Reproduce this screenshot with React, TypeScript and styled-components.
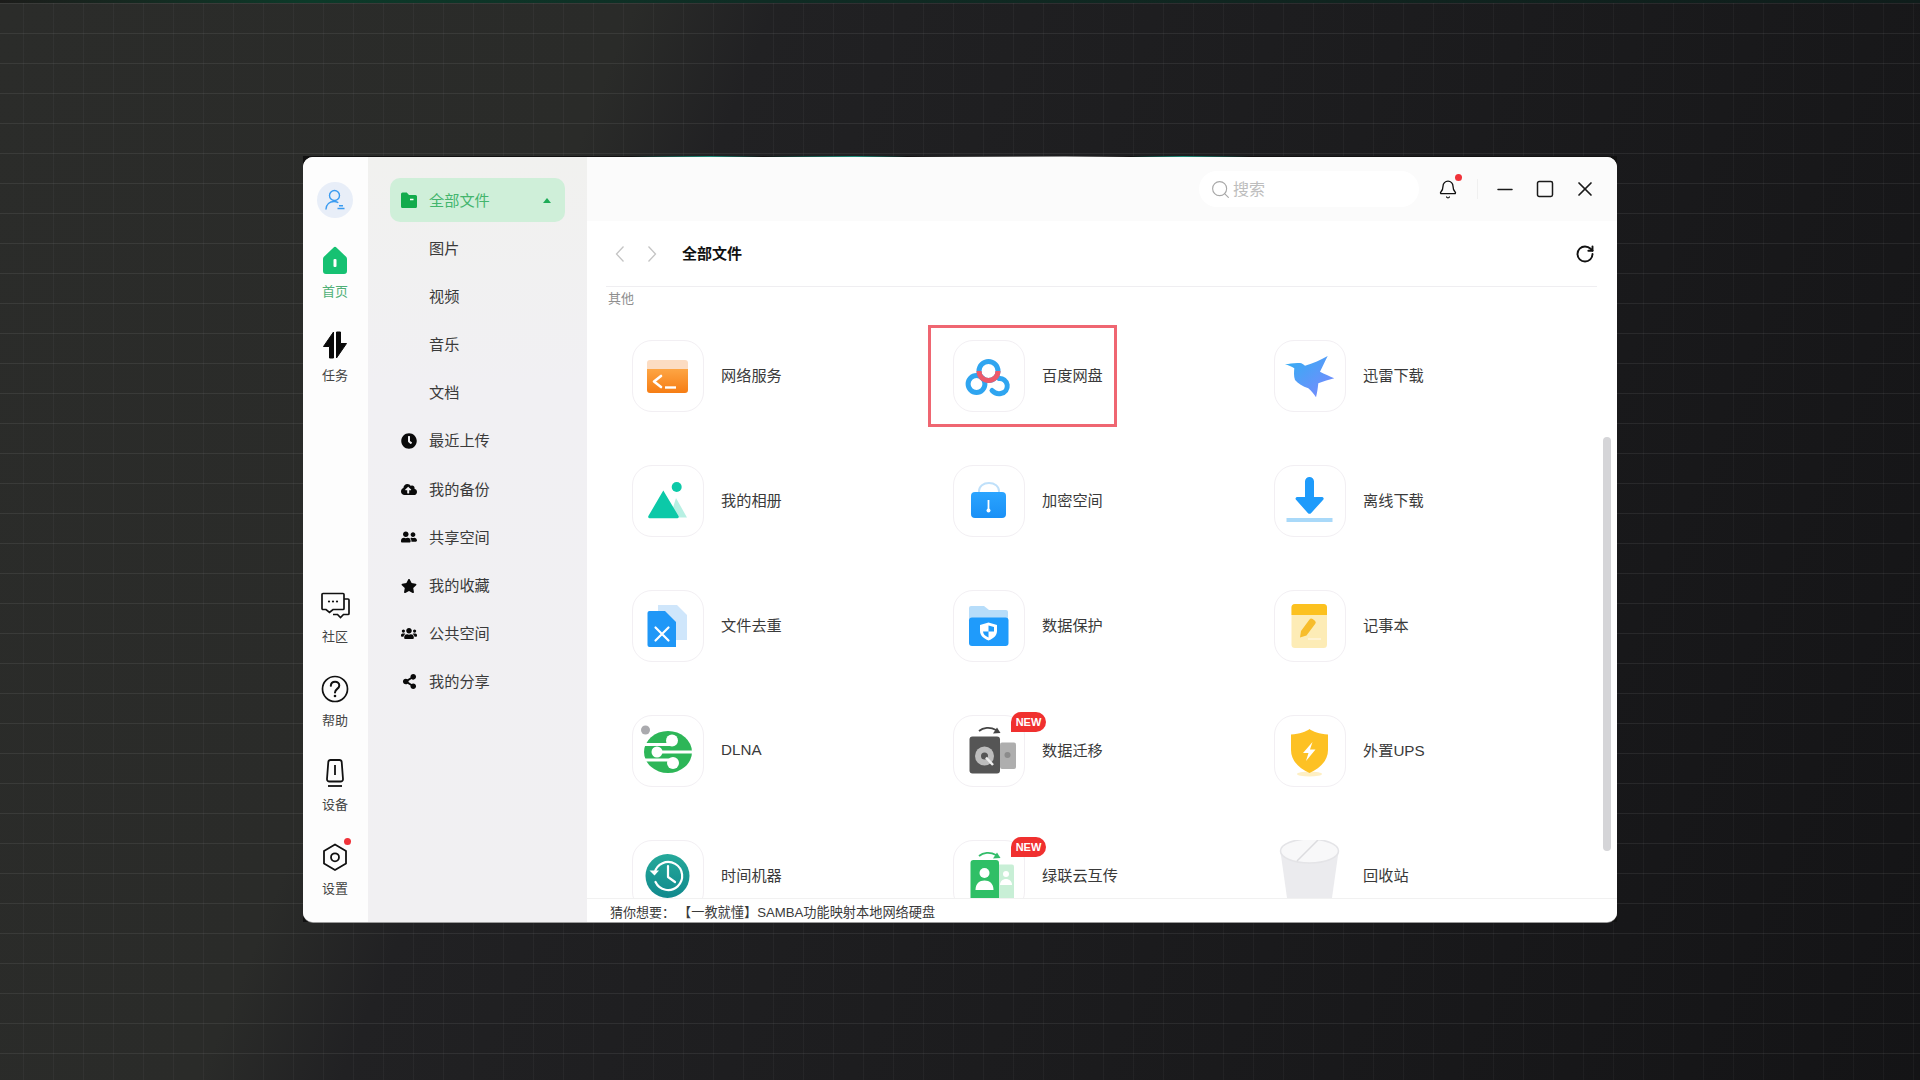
import React from "react";
import styled, { createGlobalStyle } from "styled-components";
import { Bell, Minus, RotateCw, Search, Square, X } from "lucide-react";
import {
  FaClock,
  FaCloudUploadAlt,
  FaShareAlt,
  FaStar,
  FaUserFriends,
  FaUsers,
} from "react-icons/fa";

const GlobalStyle = createGlobalStyle`
  html, body {
    margin: 0;
    padding: 0;
    height: 100%;
  }
  body {
    font-family: "Liberation Sans", "Noto Sans CJK SC", sans-serif;
    color: #333;
  }
  * {
    box-sizing: border-box;
  }
`;

const Page = styled.div`
  width: 100vw;
  height: 100vh;
  overflow: hidden;
  display: flex;
  align-items: center;
  justify-content: center;
  background:
    linear-gradient(90deg, #1c1c1a 0%, #0c3a29 16%, #0f2c24 40%, #10241f 70%, #0f1d1b 100%) 0 0 / 100% 3px no-repeat,
    linear-gradient(rgba(255, 255, 255, 0.07) 1px, transparent 1px) 0 3px / 30px 30px,
    linear-gradient(90deg, rgba(255, 255, 255, 0.035) 1px, transparent 1px) 23px 0 / 30px 30px,
    linear-gradient(112deg, #2b2c2a 0%, #2a2b29 27%, #212123 33%, #1c1c1e 60%, #141416 100%);
`;

const Frame = styled.div`
  width: 1314px;
  height: 766px;
  margin-bottom: 2px;
  padding-top: 1px;
  background: linear-gradient(
    90deg,
    #111 0%,
    #111 25%,
    #1d8f7c 31%,
    #111 35%,
    #1d8f7c 42%,
    #111 46%,
    #8f8f8f 58%,
    #111 63%,
    #1d8f7c 67%,
    #111 72%,
    #111 100%
  );
`;

const Window = styled.div`
  width: 100%;
  height: 100%;
  display: flex;
  border-radius: 10px;
  overflow: hidden;
  background: #fff;
  box-shadow: 0 1px 0 #9a9a9a;
`;

const Rail = styled.nav`
  width: 65px;
  flex-shrink: 0;
  background: #fdfdfd;
  display: flex;
  flex-direction: column;
  align-items: center;
  justify-content: space-between;
  padding: 25px 1px 24px 0;
`;

const RailGroup = styled.div`
  display: flex;
  flex-direction: column;
  align-items: center;
  gap: 29px;
`;

const Avatar = styled.div`
  width: 36px;
  height: 36px;
  margin-bottom: -1px;
  border-radius: 50%;
  background: #e8eef8;
  display: flex;
  align-items: center;
  justify-content: center;
`;

const RailItem = styled.div`
  position: relative;
  display: flex;
  flex-direction: column;
  align-items: center;
  gap: 7px;
`;

const RailIcon = styled.div`
  width: 30px;
  height: 30px;
  display: flex;
  align-items: center;
  justify-content: center;
`;

const RailLabel = styled.span<{ $active?: boolean }>`
  font-size: 13px;
  line-height: 18px;
  color: ${(p) => (p.$active ? "#4fb077" : "#444")};
`;

const RedDot = styled.span`
  position: absolute;
  width: 7px;
  height: 7px;
  border-radius: 50%;
  background: #f0333a;
`;

const RailDot = styled(RedDot)`
  top: -5px;
  right: -1px;
`;

const Sidebar = styled.aside`
  width: 219px;
  flex-shrink: 0;
  background: linear-gradient(180deg, #f1f1ef 0%, #f1f0f3 30%, #f1f0f2 100%);
  padding: 21px 22px 0;
  display: flex;
  flex-direction: column;
  gap: 4.2px;
`;

const MenuRow = styled.div<{ $active?: boolean; $indent?: boolean }>`
  height: 44px;
  flex-shrink: 0;
  display: flex;
  align-items: center;
  gap: 12px;
  padding-left: ${(p) => (p.$indent ? "39px" : "11px")};
  padding-right: 14px;
  padding-bottom: 3px;
  border-radius: 10px;
  font-size: 15.2px;
  background: ${(p) => (p.$active ? "#cfefd9" : "transparent")};
  color: ${(p) => (p.$active ? "#43b56d" : "#3a3a3a")};
`;

const MenuIcon = styled.span`
  width: 16px;
  height: 16px;
  margin-top: 3px;
  display: flex;
  align-items: center;
  justify-content: center;
  color: #0a0a0a;
`;

const Caret = styled.span`
  margin-left: auto;
  margin-top: 3px;
  width: 0;
  height: 0;
  border-left: 4px solid transparent;
  border-right: 4px solid transparent;
  border-bottom: 5px solid #1eab57;
`;

const Main = styled.main`
  position: relative;
  flex: 1;
  min-width: 0;
  display: flex;
  flex-direction: column;
`;

const TopBar = styled.header`
  height: 64px;
  flex-shrink: 0;
  background: #fbfbfb;
  display: flex;
  align-items: center;
  justify-content: flex-end;
  padding-right: 20px;
`;

const SearchBox = styled.div`
  width: 220px;
  height: 36px;
  border-radius: 18px;
  background: #fff;
  display: flex;
  align-items: center;
  gap: 2px;
  padding-left: 11px;
  font-size: 16px;
  color: #bdbdbd;
  margin-right: 19px;
`;

const SearchText = styled.span`
  padding-bottom: 2px;
`;

const BellBox = styled.div`
  position: relative;
  width: 20px;
  height: 22px;
  display: flex;
  align-items: center;
  justify-content: center;
  margin-right: 19px;
`;

const BellDot = styled(RedDot)`
  top: -4px;
  right: -4px;
`;

const VRule = styled.div`
  width: 1px;
  height: 20px;
  background: #f0f0f0;
  margin-right: 15px;
`;

const WinButtons = styled.div`
  display: flex;
  align-items: center;
  gap: 16px;
`;

const WinButton = styled.div`
  width: 24px;
  height: 24px;
  display: flex;
  align-items: center;
  justify-content: center;
  color: #1a1a1a;
`;

const PathBar = styled.div`
  height: 66px;
  flex-shrink: 0;
  margin: 0 20px 0 19px;
  border-bottom: 1px solid #efeef1;
  display: flex;
  align-items: center;
  padding-left: 9px;
`;

const NavArrows = styled.div`
  display: flex;
  align-items: center;
  gap: 22px;
  margin-right: 25px;
`;

const PathTitle = styled.h1`
  margin: 0;
  padding-bottom: 2px;
  font-size: 15px;
  font-weight: 700;
  color: #111;
`;

const RefreshBtn = styled.div`
  margin-left: auto;
  margin-right: 2px;
  display: flex;
  color: #111;
`;

const Scroller = styled.div`
  flex: 1;
  min-height: 0;
  overflow: hidden;
  padding: 3px 0 0 20px;
`;

const GroupTitle = styled.div`
  padding-left: 1px;
  font-size: 13px;
  line-height: 18px;
  color: #8f8f8f;
  margin-bottom: 32px;
`;

const AppGrid = styled.div`
  display: grid;
  grid-template-columns: repeat(3, 321px);
  grid-auto-rows: 125px;
  padding-left: 25px;
`;

const AppItem = styled.div`
  position: relative;
  height: 72px;
  display: flex;
  align-items: center;
  gap: 17px;
`;

const Tile = styled.div<{ $bare?: boolean }>`
  position: relative;
  width: 72px;
  height: 72px;
  flex-shrink: 0;
  border-radius: 20px;
  border: 1px solid ${(p) => (p.$bare ? "transparent" : "#f2eff3")};
  background: #fff;

  svg {
    position: absolute;
    left: -1px;
    top: -1px;
  }
`;

const AppLabel = styled.span`
  padding-bottom: 4px;
  font-size: 15.2px;
  color: #3a3a3a;
  white-space: nowrap;
`;

const NewBadge = styled.span`
  position: absolute;
  left: 57px;
  top: -4px;
  width: 35px;
  height: 20px;
  border-radius: 10px 10px 10px 0;
  background: #f0302f;
  color: #fff;
  font-size: 11px;
  font-weight: 700;
  line-height: 20px;
  text-align: center;
`;

const Highlight = styled.div`
  position: absolute;
  left: -25px;
  top: -15px;
  width: 189px;
  height: 102px;
  border: 3px solid #ef6671;
  pointer-events: none;
`;

const ScrollThumb = styled.div`
  position: absolute;
  right: 6px;
  top: 280px;
  width: 8px;
  height: 414px;
  border-radius: 4px;
  background: #d5d5d8;
`;

const Footer = styled.footer`
  height: 24px;
  flex-shrink: 0;
  border-top: 1px solid #f1f1f1;
  background: #fff;
  display: flex;
  align-items: center;
  padding: 1px 0 0 23px;
  font-size: 13px;
  color: #3a3a3a;
`;

const FooterLink = styled.span`
  margin-left: 3px;
  font-size: 13.2px;
`;

type SvgProps = { children: React.ReactNode; size?: number };

const Ico = ({ children, size = 72 }: SvgProps) => (
  <svg width={size} height={size} viewBox={`0 0 ${size} ${size}`} fill="none">
    {children}
  </svg>
);

const TerminalIcon = () => (
  <Ico>
    <defs>
      <linearGradient id="term" x1="0" y1="0" x2="0" y2="1">
        <stop offset="0" stopColor="#fda544" />
        <stop offset="1" stopColor="#f67d14" />
      </linearGradient>
    </defs>
    <path d="M15 23a3 3 0 0 1 3-3h35a3 3 0 0 1 3 3v6H15z" fill="#fcdcc2" />
    <path d="M15 29h41v21a3 3 0 0 1-3 3H18a3 3 0 0 1-3-3z" fill="url(#term)" />
    <path d="M29 36l-7 5.5 7 5.5" stroke="#fff" strokeWidth="2.6" strokeLinecap="round" strokeLinejoin="round" />
    <path d="M33 47.5h11" stroke="#fff" strokeWidth="2.4" />
  </Ico>
);

const BaiduIcon = () => (
  <Ico>
    <circle cx="23.5" cy="44" r="8.4" stroke="#2fa5f0" strokeWidth="5" />
    <path d="M39 50.5c2.5 2.6 6 3.6 8.8 3 4.4-.8 7-4.4 6.4-8.6-.6-4.2-4.4-7-8.4-6.4" stroke="#2fa5f0" strokeWidth="5" strokeLinecap="round" />
    <circle cx="35.5" cy="31" r="9.5" stroke="#2fa5f0" strokeWidth="5" />
    <path d="M26 31c0 5.4 4.3 9.5 9.5 9.5S45 36.4 45 31" stroke="#ec5a6b" strokeWidth="5" />
  </Ico>
);

const BirdIcon = () => (
  <Ico>
    <defs>
      <linearGradient id="bird" x1="0" y1="0" x2="1" y2="1">
        <stop offset="0" stopColor="#2fb0f2" />
        <stop offset="1" stopColor="#7f86ff" />
      </linearGradient>
    </defs>
    <path
      d="M11 24.3c5-.6 9-1.6 15-1.2 2 .2 3.4 1.6 5 2.6 8-2.4 16-5.8 22.7-9.7-2.6 5-5 10.6-7.7 15.7 4.4 2.2 9.4 4.6 14.3 6.6-5.4 1.4-10.8 3-16 5-.4 4.4-1 9-2.3 14-2.2-3.2-4.6-6.4-7.7-9-5.4-2-10.4-4.6-13.3-8.3-1.4-4-1-8.4-.7-11.7-2.8-1.6-5.8-3-9.3-4z"
      fill="url(#bird)"
    />
  </Ico>
);

const AlbumIcon = () => (
  <Ico>
    <path d="M44 33l11 19.5H38z" fill="#b7f0e3" />
    <path d="M31.3 25.5L46.5 51a1.4 1.4 0 0 1-1.2 2.2H17.6a1.4 1.4 0 0 1-1.2-2.2z" fill="#0cc9a8" />
    <circle cx="44.7" cy="22" r="5" fill="#0cc9a8" />
  </Ico>
);

const LockIcon = () => (
  <Ico>
    <defs>
      <linearGradient id="lock" x1="0" y1="0" x2="0" y2="1">
        <stop offset="0" stopColor="#2aa4ff" />
        <stop offset="1" stopColor="#1a90f6" />
      </linearGradient>
    </defs>
    <path d="M26 28v-2c0-4.6 4.4-8 10-8s10 3.4 10 8v2" stroke="#bfe0fa" strokeWidth="2" />
    <rect x="18" y="27" width="35" height="26" rx="4" fill="url(#lock)" />
    <path d="M35.5 35v9" stroke="#fff" strokeWidth="1.8" />
    <circle cx="35.5" cy="45.5" r="2" fill="#fff" />
  </Ico>
);

const DownloadIcon = () => (
  <Ico>
    <path d="M31 16.5a4.5 4.5 0 0 1 9 0V32h8a1.6 1.6 0 0 1 1.2 2.7L37.2 48a2.4 2.4 0 0 1-3.4 0L22 34.7a1.6 1.6 0 0 1 1.2-2.7H31z" fill="#1e9bfb" />
    <rect x="12.5" y="53" width="46" height="4" fill="#a9d9f9" />
  </Ico>
);

const DedupIcon = () => (
  <Ico>
    <path d="M26 15h19l10 10v25H26z" fill="#cfe6fb" />
    <path d="M17.5 21H33l11 11v25H17.5a2 2 0 0 1-2-2V23a2 2 0 0 1 2-2z" fill="#1f97f7" />
    <path d="M23.5 37.5l13 13m0-13l-13 13" stroke="#fff" strokeWidth="2.2" strokeLinecap="round" />
  </Ico>
);

const ProtectIcon = () => (
  <Ico>
    <path d="M16 18a2 2 0 0 1 2-2h13l5 4h17a2 2 0 0 1 2 2v12H16z" fill="#b7ddfa" />
    <rect x="16" y="27.5" width="39.5" height="28.5" rx="3" fill="#1f9bfb" />
    <path d="M35.5 32.5l8.5 2.5v6c0 4.5-3.5 7.5-8.5 9.5-5-2-8.500-5-8.500-9.500v-6z" fill="#fff" />
    <path d="M35.5 35.500l5.500 1.600v4.400h-5.500zM35.500 41.500v6c-3.200-1.400-5.500-3.500-5.500-6z" fill="#1f9bfb" />
  </Ico>
);

const NoteIcon = () => (
  <Ico>
    <rect x="17.5" y="14" width="35.5" height="44" rx="3.5" fill="#fdecb6" />
    <path d="M17.5 17.5a3.5 3.5 0 0 1 3.5-3.5h28.5a3.5 3.5 0 0 1 3.5 3.500V25H17.500z" fill="#fcc11f" />
    <path d="M27 41l8.500-11.500a2.200 2.200 0 0 1 3.200-.4l2.200 1.600a2.200 2.200 0 0 1 .4 3L32.500 45.500l-6.500 2z" fill="#f7bd2c" />
    <path d="M34 49h13" stroke="#fff6dc" strokeWidth="1.5" />
  </Ico>
);

const DlnaIcon = () => (
  <Ico>
    <circle cx="13.5" cy="15" r="4.5" fill="#aaaaae" />
    <ellipse cx="36" cy="37" rx="24" ry="21" fill="#2db658" />
    <path d="M10 29.5h28" stroke="#fff" strokeWidth="3" />
    <circle cx="40" cy="25.5" r="6" fill="#fff" />
    <path d="M26 37h36" stroke="#fff" strokeWidth="3" />
    <circle cx="25" cy="37" r="5.5" fill="#fff" />
    <path d="M10 45h28" stroke="#fff" strokeWidth="3" />
    <circle cx="41" cy="48" r="6" fill="#fff" />
  </Ico>
);

const MigrateIcon = () => (
  <Ico>
    <rect x="47" y="27.5" width="16" height="26.5" rx="2" fill="#aeaeae" />
    <circle cx="54.5" cy="40" r="3" fill="#8b8b8b" />
    <path d="M26 16c4-3.5 11-4.5 17-1" stroke="#444" strokeWidth="1.8" />
    <path d="M47.5 18l-7.5.5 4-6z" fill="#444" />
    <rect x="16.5" y="21.5" width="30.5" height="37" rx="3" fill="#555" />
    <circle cx="31.5" cy="41" r="9.5" fill="#bdbdbd" />
    <circle cx="31.5" cy="41" r="3.5" fill="#555" />
    <path d="M33 42.5l7 7.5" stroke="#eee" strokeWidth="2.5" />
  </Ico>
);

const TransferIcon = () => (
  <Ico>
    <rect x="44" y="24.5" width="17" height="36" rx="2" fill="#c8efd6" />
    <circle cx="53" cy="34" r="3" fill="#fff" />
    <path d="M47 45c0-4 3-6 6-6s6 2 6 6z" fill="#fff" />
    <path d="M26 16c4-3.5 11-4.5 17-1" stroke="#33bd6a" strokeWidth="1.8" />
    <path d="M47.5 18l-7.5.5 4-6z" fill="#33bd6a" />
    <rect x="17.5" y="20" width="28.5" height="44" rx="3" fill="#2fbf66" />
    <circle cx="31.5" cy="33" r="5" fill="#fff" />
    <path d="M22.5 50c0-6.5 4-9.5 9-9.5s9 3 9 9.5z" fill="#fff" />
  </Ico>
);

const UpsIcon = () => (
  <Ico>
    <ellipse cx="35.5" cy="59" rx="12.5" ry="2.5" fill="#feefc4" />
    <path d="M35.5 14c3 2.5 10 5 18.5 5.5V35c0 10.5-8 18.5-18.5 23C25 53.5 17 45.5 17 35V19.5C25.5 19 32.5 16.5 35.5 14z" fill="#fdc124" />
    <path d="M38.5 27l-9.5 11h5.5l-2.5 8 9.500-11.500h-5.500z" fill="#fff" />
  </Ico>
);

const ClockIcon = () => (
  <Ico>
    <defs>
      <linearGradient id="tm" x1="0" y1="0" x2="0" y2="1">
        <stop offset="0" stopColor="#25a99a" />
        <stop offset="1" stopColor="#11898d" />
      </linearGradient>
    </defs>
    <circle cx="35.5" cy="36" r="22" fill="url(#tm)" />
    <path d="M22.5 33a14 14 0 1 1 1 9" stroke="#fff" strokeWidth="2.2" strokeLinecap="round" />
    <path d="M17.5 30.5l5 5 4.5-5z" fill="#fff" />
    <path d="M36 26v11l7 5" stroke="#fff" strokeWidth="2.2" strokeLinecap="round" strokeLinejoin="round" />
  </Ico>
);

const BinIcon = () => (
  <Ico>
    <path d="M6.5 12L15 72h41l8.5-60z" fill="#ebebee" />
    <ellipse cx="35.5" cy="11" rx="29" ry="12" fill="#f8f8f9" stroke="#e4e4e7" strokeWidth="1.5" />
    <path d="M44 0L23 21" stroke="#dcdcdf" strokeWidth="1.5" />
  </Ico>
);

const AvatarIcon = () => (
  <Ico size={24}>
    <circle cx="11.5" cy="7.5" r="5" stroke="#3a9bf0" strokeWidth="1.4" />
    <path d="M3 21c.4-4.5 3.6-7.5 8-7.5 1.5 0 2.7.3 3.8.9" stroke="#3a9bf0" strokeWidth="1.4" strokeLinecap="round" />
    <path d="M16 17.8h4M14.5 20.5h7" stroke="#3a9bf0" strokeWidth="1.6" />
  </Ico>
);

const HomeIcon = () => (
  <Ico size={30}>
    <path d="M13.6 1.5a2 2 0 0 1 2.8 0l9.700 9.300a3 3 0 0 1 .9 2.100V25a3 3 0 0 1-3 3H6a3 3 0 0 1-3-3V12.900a3 3 0 0 1 .9-2.100z" fill="#16c172" />
    <rect x="13.5" y="13" width="3" height="8" rx="1" fill="#fff" />
  </Ico>
);

const TaskIcon = () => (
  <Ico size={30}>
    <path d="M13.5 2v26h-4V16.5H3.5z" fill="#0a0a0a" stroke="#0a0a0a" strokeLinejoin="round" />
    <path d="M16.5 28V2h4v11.5h6z" fill="#0a0a0a" stroke="#0a0a0a" strokeLinejoin="round" />
  </Ico>
);

const ChatIcon = () => (
  <Ico size={30}>
    <path d="M3 2.5h20a1 1 0 0 1 1 1v14a1 1 0 0 1-1 1H13l-3.500 3-3.500-3H3a1 1 0 0 1-1-1v-14a1 1 0 0 1 1-1z" stroke="#111" strokeWidth="1.7" />
    <path d="M24 8h4a1 1 0 0 1 1 1v13.500a1 1 0 0 1-1 1h-4.500l-3 3-3-3H13" stroke="#111" strokeWidth="1.7" />
    <circle cx="9" cy="10.5" r="1.1" fill="#111" />
    <circle cx="13" cy="10.5" r="1.1" fill="#111" />
    <circle cx="17" cy="10.5" r="1.1" fill="#111" />
  </Ico>
);

const HelpIcon = () => (
  <Ico size={30}>
    <circle cx="15" cy="14" r="12.5" stroke="#111" strokeWidth="1.7" />
    <path d="M10.8 10.8c.2-2.6 2-4.100 4.300-4.100s4.200 1.600 4.200 3.800c0 3.400-4.300 3.400-4.300 7" stroke="#111" strokeWidth="2" strokeLinecap="round" />
    <circle cx="15" cy="21" r="1.3" fill="#111" />
  </Ico>
);

const DeviceIcon = () => (
  <Ico size={30}>
    <path d="M10.5 1h9c1.200 0 2 .8 2.200 2l1.300 17c.1 1.600-1 2.500-2.500 2.500H9.500c-1.500 0-2.600-.9-2.500-2.500L8.300 3c.2-1.200 1-2 2.200-2z" stroke="#111" strokeWidth="1.8" />
    <path d="M15 6v10" stroke="#111" strokeWidth="1.8" />
    <path d="M8 27h14" stroke="#111" strokeWidth="1.8" />
  </Ico>
);

const GearIcon = () => (
  <Ico size={30}>
    <path d="M15 1.5L26 8v12.500L15 27 4 20.500V8z" stroke="#111" strokeWidth="1.8" strokeLinejoin="round" />
    <circle cx="15" cy="14.3" r="4" stroke="#111" strokeWidth="1.8" />
  </Ico>
);

const FolderIcon = () => (
  <Ico size={16}>
    <path d="M0 2a1.5 1.5 0 0 1 1.5-1.5h4.200L8 3h6.500A1.500 1.500 0 0 1 16 4.500v10a1.500 1.500 0 0 1-1.500 1.500h-13A1.500 1.500 0 0 1 0 14.500z" fill="#12ab4c" />
    <path d="M9 7.5h3.5" stroke="#fff" strokeWidth="1.3" />
  </Ico>
);

const ChevronIcon = ({ flip }: { flip?: boolean }) => (
  <svg width="10" height="16" viewBox="0 0 10 16" fill="none">
    <path
      d={flip ? "M1.5 .5L8.5 8l-7 7.5" : "M8.5 .5L1.5 8l7 7.5"}
      stroke="#c4c4c4"
      strokeWidth="1.3"
    />
  </svg>
);

const railTop = [
  { label: "首页", icon: <HomeIcon />, active: true },
  { label: "任务", icon: <TaskIcon /> },
];

const railBottom = [
  { label: "社区", icon: <ChatIcon /> },
  { label: "帮助", icon: <HelpIcon /> },
  { label: "设备", icon: <DeviceIcon /> },
  { label: "设置", icon: <GearIcon />, dot: true },
];

const subMenu = ["图片", "视频", "音乐", "文档"];

const menu = [
  { label: "最近上传", icon: <FaClock size={16} /> },
  { label: "我的备份", icon: <FaCloudUploadAlt size={19} /> },
  { label: "共享空间", icon: <FaUserFriends size={18} /> },
  { label: "我的收藏", icon: <FaStar size={16} /> },
  { label: "公共空间", icon: <FaUsers size={17} /> },
  { label: "我的分享", icon: <FaShareAlt size={15} /> },
];

type AppEntry = {
  label: string;
  icon: React.ReactNode;
  isNew?: boolean;
  marked?: boolean;
  bare?: boolean;
};

const apps: AppEntry[] = [
  { label: "网络服务", icon: <TerminalIcon /> },
  { label: "百度网盘", icon: <BaiduIcon />, marked: true },
  { label: "迅雷下载", icon: <BirdIcon /> },
  { label: "我的相册", icon: <AlbumIcon /> },
  { label: "加密空间", icon: <LockIcon /> },
  { label: "离线下载", icon: <DownloadIcon /> },
  { label: "文件去重", icon: <DedupIcon /> },
  { label: "数据保护", icon: <ProtectIcon /> },
  { label: "记事本", icon: <NoteIcon /> },
  { label: "DLNA", icon: <DlnaIcon /> },
  { label: "数据迁移", icon: <MigrateIcon />, isNew: true },
  { label: "外置UPS", icon: <UpsIcon /> },
  { label: "时间机器", icon: <ClockIcon /> },
  { label: "绿联云互传", icon: <TransferIcon />, isNew: true },
  { label: "回收站", icon: <BinIcon />, bare: true },
];

function App() {
  return (
    <Page>
      <GlobalStyle />
      <Frame>
        <Window>
          <Rail>
            <RailGroup>
              <Avatar>
                <AvatarIcon />
              </Avatar>
              {railTop.map((item) => (
                <RailItem key={item.label}>
                  <RailIcon>{item.icon}</RailIcon>
                  <RailLabel $active={item.active}>{item.label}</RailLabel>
                </RailItem>
              ))}
            </RailGroup>
            <RailGroup>
              {railBottom.map((item) => (
                <RailItem key={item.label}>
                  {item.dot && <RailDot />}
                  <RailIcon>{item.icon}</RailIcon>
                  <RailLabel>{item.label}</RailLabel>
                </RailItem>
              ))}
            </RailGroup>
          </Rail>

          <Sidebar>
            <MenuRow $active>
              <MenuIcon>
                <FolderIcon />
              </MenuIcon>
              全部文件
              <Caret />
            </MenuRow>
            {subMenu.map((label) => (
              <MenuRow key={label} $indent>
                {label}
              </MenuRow>
            ))}
            {menu.map((item) => (
              <MenuRow key={item.label}>
                <MenuIcon>{item.icon}</MenuIcon>
                {item.label}
              </MenuRow>
            ))}
          </Sidebar>

          <Main>
            <TopBar>
              <SearchBox>
                <Search size={21} strokeWidth={1.3} color="#a8a8a8" />
                <SearchText>搜索</SearchText>
              </SearchBox>
              <BellBox>
                <Bell size={23} strokeWidth={1.6} color="#111" />
                <BellDot />
              </BellBox>
              <VRule />
              <WinButtons>
                <WinButton>
                  <Minus size={29} strokeWidth={1.5} />
                </WinButton>
                <WinButton>
                  <Square size={20} strokeWidth={1.8} />
                </WinButton>
                <WinButton>
                  <X size={28} strokeWidth={1.7} />
                </WinButton>
              </WinButtons>
            </TopBar>

            <PathBar>
              <NavArrows>
                <ChevronIcon />
                <ChevronIcon flip />
              </NavArrows>
              <PathTitle>全部文件</PathTitle>
              <RefreshBtn>
                <RotateCw size={20} strokeWidth={2.3} />
              </RefreshBtn>
            </PathBar>

            <Scroller>
              <GroupTitle>其他</GroupTitle>
              <AppGrid>
                {apps.map((app) => (
                  <AppItem key={app.label}>
                    <Tile $bare={app.bare}>
                      {app.icon}
                      {app.isNew && <NewBadge>NEW</NewBadge>}
                    </Tile>
                    <AppLabel>{app.label}</AppLabel>
                    {app.marked && <Highlight />}
                  </AppItem>
                ))}
              </AppGrid>
            </Scroller>

            <Footer>
              猜你想要：
              <FooterLink>【一教就懂】SAMBA功能映射本地网络硬盘</FooterLink>
            </Footer>

            <ScrollThumb />
          </Main>
        </Window>
      </Frame>
    </Page>
  );
}

export default App;
